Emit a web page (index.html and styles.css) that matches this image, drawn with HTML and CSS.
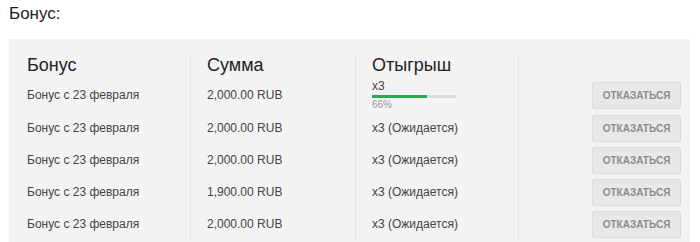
FILE: index.html
```html
<!DOCTYPE html>
<html lang="ru">
<head>
<meta charset="utf-8">
<link rel="stylesheet" href="styles.css">
</head>
<body>
<h2 class="title">Бонус:</h2>
<div class="panel">
  <div class="grid">
    <div class="cell head c1">Бонус</div>
    <div class="cell head c2">Сумма</div>
    <div class="cell head c3">Отыгрыш</div>
    <div class="cell head c4"></div>

    <div class="cell r1 c1">Бонус с 23 февраля</div>
    <div class="cell r1 c2">2,000.00 RUB</div>
    <div class="cell r1 c3 prog">
      <span class="mult">x3</span>
      <span class="bar"><span class="fill" style="width:66%"></span></span>
      <span class="pct">66%</span>
    </div>
    <div class="cell r1 c4"><button class="btn">Отказаться</button></div>

    <div class="cell c1">Бонус с 23 февраля</div>
    <div class="cell c2">2,000.00 RUB</div>
    <div class="cell c3">x3 (Ожидается)</div>
    <div class="cell c4"><button class="btn">Отказаться</button></div>

    <div class="cell c1">Бонус с 23 февраля</div>
    <div class="cell c2">2,000.00 RUB</div>
    <div class="cell c3">x3 (Ожидается)</div>
    <div class="cell c4"><button class="btn">Отказаться</button></div>

    <div class="cell c1">Бонус с 23 февраля</div>
    <div class="cell c2">1,900.00 RUB</div>
    <div class="cell c3">x3 (Ожидается)</div>
    <div class="cell c4"><button class="btn">Отказаться</button></div>

    <div class="cell c1">Бонус с 23 февраля</div>
    <div class="cell c2">2,000.00 RUB</div>
    <div class="cell c3">x3 (Ожидается)</div>
    <div class="cell c4"><button class="btn">Отказаться</button></div>
  </div>
</div>
</body>
</html>
```
FILE: styles.css
```css
html, body {
  margin: 0;
  padding: 0;
  background: #fff;
  font-family: "Liberation Sans", Arial, sans-serif;
  color: #333;
  overflow: hidden;
}
body {
  padding: 0 10px 0 9px;
  height: 242px;
  box-sizing: border-box;
}
.title {
  margin: 0;
  padding-top: 4px;
  height: 39px;
  box-sizing: border-box;
  font-size: 17px;
  font-weight: normal;
  color: #222;
  line-height: 20px;
}
.panel {
  background: #f3f3f3;
  padding-top: 16px;
  height: 203px;
  box-sizing: border-box;
}
.grid {
  display: grid;
  grid-template-columns: 181px 165px 163px 1fr;
  grid-template-rows: 23px 34px 32px 32px 32px 32px;
}
.cell {
  display: flex;
  align-items: center;
  font-size: 12px;
  color: #444;
  padding-left: 18px;
}
.c2, .c3, .c4 {
  border-left: 1px solid #e4e4e4;
  padding-left: 16px;
}
.c4 {
  justify-content: flex-end;
  padding-right: 9px;
}
.head {
  align-items: flex-start;
  font-size: 18px;
  color: #222;
  line-height: 20px;
}
.prog {
  flex-direction: column;
  align-items: flex-start;
  justify-content: flex-start;
  padding-top: 2px;
}
.mult {
  font-size: 12px;
  line-height: 12px;
  color: #444;
}
.bar {
  display: block;
  width: 84px;
  height: 3px;
  background: #dcdcdc;
  margin-top: 3px;
}
.fill {
  display: block;
  height: 100%;
  background: #2ca84e;
}
.pct {
  font-size: 10px;
  line-height: 12px;
  color: #999;
  margin-top: 1px;
}
.btn {
  width: 89px;
  height: 27px;
  background: #e8e8e8;
  border: 1px solid #dcdcdc;
  border-radius: 2px;
  font-family: "Liberation Sans", Arial, sans-serif;
  font-size: 10px;
  font-weight: bold;
  color: #8c8c8c;
  text-transform: uppercase;
  padding: 0;
}
```
